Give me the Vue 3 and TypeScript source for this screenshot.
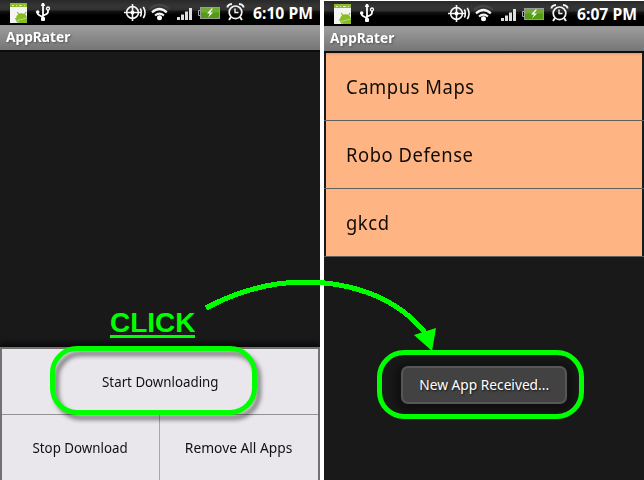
<script setup lang="ts">
import { ref } from 'vue'

interface Phone {
  id: string
  time: string
  apps: string[]
}

const title = 'AppRater'
const phones = ref<Phone[]>([
  { id: 'left', time: '6:10 PM', apps: [] },
  { id: 'right', time: '6:07 PM', apps: ['Campus Maps', 'Robo Defense', 'gkcd'] },
])
</script>

<template>
  <main class="stage">
    <section v-for="phone in phones" :key="phone.id" class="phone" :class="phone.id">
      <header class="status">
        <svg class="icons" width="250" height="25" viewBox="0 0 250 25">
          <!-- package installer -->
          <rect x="10" y="3" width="17" height="20" fill="#f4f5f2" />
          <rect x="10" y="3" width="17" height="4" fill="#8dbb2d" />
          <path d="M12 5.500h2M16 5.500h1M19 5.500h3M24 5.500h1" stroke="#dbeab9" stroke-width="1" />
          <path d="M16 18c.500-3 2.500-4.700 5.500-4.700 2.500 0 4.500 1.500 5.500 4V23h-8z" fill="#86bd20" />
          <path d="M19 14.500l-1.700-2.500M24.500 14.500l1.500-2.500M15.500 18l2.500 5" stroke="#86bd20" stroke-width="1.200" />
          <path d="M17 20.500l10-2.500" stroke="#c9e08f" stroke-width=".8" />
          <!-- usb -->
          <g fill="none" stroke="#fff" stroke-width="1.800">
            <path d="M43 5v14M37.500 11.500v1.500q0 1.500 2 2.300l3.500 2M48 10v2q0 1.500-2 2.300l-3 1.500" />
            <circle cx="48" cy="8.500" r="1.500" stroke-width="1.300" />
          </g>
          <path d="M41 5.500l1-2.500h2l1 2.500v.5h-4z" fill="#fff" />
          <circle cx="37.700" cy="12" r="1.800" fill="#fff" />
          <rect x="41" y="17" width="4" height="4" rx="1" fill="#fff" />
          <!-- gps target -->
          <g fill="none" stroke="#f6f6f6" stroke-width="1.600">
            <circle cx="132.500" cy="12.500" r="5.900" />
            <path d="M132.500 4v17M124 12.500h17" />
            <path d="M140.300 8.500q2.200 4 0 8M143.300 6.800q3.400 5.700 0 11.400" />
          </g>
          <circle cx="132.500" cy="12.500" r="2" fill="#fff" />
          <!-- wifi -->
          <g fill="none">
            <path d="M149.800 8.700q9.700-7.600 19.200 0" stroke="#444" stroke-width="2" />
            <path d="M152 12.400q7.400-6.800 14.800 0" stroke="#f4f4f4" stroke-width="2.200" />
            <path d="M155 15.600q4.500-4 9 0" stroke="#f4f4f4" stroke-width="2" />
          </g>
          <circle cx="159.500" cy="17.700" r="2.500" fill="#fff" />
          <!-- signal -->
          <path d="M177 17h3v3h-3zM181 14.500h3V20h-3zM185 11.500h3V20h-3zM189 8h3v12h-3z" fill="#dedede" />
          <!-- battery -->
          <rect x="200.500" y="7.500" width="19" height="11" fill="#519c12" stroke="#9b9b9b" />
          <rect x="201" y="8" width="18" height="4.500" fill="#6ead32" />
          <path d="M200 10.500h-1.500v5h1.500" fill="none" stroke="#aaa" />
          <path d="M211.500 8.500l-4.500 5h3l-2 4 5-5h-3l3-4z" fill="#fff" />
          <!-- alarm -->
          <g fill="none" stroke="#f4f4f4" stroke-width="1.700">
            <circle cx="235.500" cy="12.300" r="6.300" />
            <path d="M235 8.500v4h3.500" stroke-width="1.400" />
            <path d="M227.500 7.500q0-3 4.500-3.500M239 4q4.500.500 4.500 3.500M231 17l-2 3M240 17l2 3" stroke-width="2" />
          </g>
        </svg>
        <time class="clock">{{ phone.time }}</time>
      </header>
      <h1 class="title"><span>{{ title }}</span></h1>

      <div v-if="phone.id === 'left'" class="body">
        <div class="controls">
          <button class="start"><span>Start Downloading</span></button>
          <div class="pair">
            <button class="stop"><span>Stop Download</span></button>
            <button class="remove"><span>Remove All Apps</span></button>
          </div>
        </div>
      </div>
      <div v-else class="body">
        <ul class="apps">
          <li v-for="app in phone.apps" :key="app"><div class="app"><span>{{ app }}</span></div></li>
        </ul>
        <div class="toast"><span>New App Received...</span></div>
      </div>
    </section>

    <div class="ring ring-start"></div>
    <div class="ring ring-toast"></div>
    <div class="click">CLICK</div>
    <svg class="arrow" width="644" height="480" viewBox="0 0 644 480">
      <path d="M206 308C240 290 272 282 304 282C355 282 400 300 426 334" fill="none" stroke="#0f0" stroke-width="5" shape-rendering="crispEdges" />
      <path d="M414 335L436 328L432 351Z" fill="#0f0" />
    </svg>
  </main>
</template>

<style>
body {
  margin: 0;
  background: #fff;
}
</style>

<style scoped>
.stage {
  position: relative;
  display: flex;
  gap: 4px;
  width: 644px;
  height: 480px;
  overflow: hidden;
  background: #fff;
  font-family: "Noto Sans", "Open Sans", sans-serif;
}
.phone {
  display: flex;
  flex-direction: column;
  width: 320px;
  height: 480px;
  box-sizing: border-box;
  overflow: hidden;
  background: #191919;
}
.right {
  border-top: 1px solid #fff;
}
.status {
  display: flex;
  align-items: center;
  flex: none;
  height: 25px;
  background: linear-gradient(#292929 0, #353535 6px, #303030 10px, #151515 11px, #000 15px);
}
.icons {
  flex: none;
}
.clock {
  margin-left: 3px;
  color: #fff;
  font-size: 16px;
  font-weight: 700;
  line-height: 25px;
  white-space: nowrap;
  transform: translateY(1px) scaleX(.98);
  transform-origin: left;
}
.title {
  flex: none;
  height: 25px;
  margin: 0;
  padding-left: 6px;
  box-sizing: border-box;
  background: linear-gradient(#989898, #9a9a9a 3px, #757575);
  color: #fff;
  font-size: 14px;
  line-height: 24px;
  text-shadow: 1px 1px 2px #555;
}
.title span {
  display: inline-block;
  transform: scaleX(.98);
  transform-origin: left;
}
.body {
  display: flex;
  flex-direction: column;
  flex: 1;
  min-height: 0;
  border-top: 2px solid #0d0d0d;
}
.controls {
  display: flex;
  flex-direction: column;
  height: 133px;
  margin-top: auto;
  box-sizing: border-box;
  border: 2px solid #727272;
  border-bottom: 0;
  background: #e9e7eb;
  box-shadow: 0 -3px 6px #080508;
}
button {
  display: flex;
  align-items: center;
  justify-content: center;
  padding: 0;
  border: 0;
  background: transparent;
  color: #111;
  font: 14px "Noto Sans", sans-serif;
}
button span {
  transform: scaleX(.95);
  white-space: nowrap;
}
.remove span {
  transform: scaleX(.985);
}
.start {
  height: 66px;
  border-bottom: 1px solid #939195;
}
.pair {
  display: grid;
  grid-template-columns: 158px 1fr;
  flex: 1;
}
.stop {
  border-right: 1px solid #a9a7aa;
}
.apps {
  margin: 0;
  padding: 0;
  list-style: none;
}
.apps li {
  height: 67px;
  padding: 0 2px;
  border-bottom: 1px solid #606060;
}
.app {
  display: flex;
  align-items: center;
  height: 67px;
  padding-left: 20px;
  background: #ffb583;
  color: #100c08;
  font-size: 20px;
}
.apps li:first-child .app {
  background: linear-gradient(#df9e74, #ffb583 3px);
}
.app span {
  letter-spacing: .6px;
  transform: scaleX(.92);
  transform-origin: left;
}
.toast {
  display: flex;
  align-items: center;
  justify-content: center;
  width: 166px;
  height: 38px;
  margin: 109px 0 0 77px;
  box-sizing: border-box;
  border: 2px solid #575757;
  border-radius: 7px;
  background: #424242;
  box-shadow: 0 2px 7px 6px #101010;
  color: #fff;
  font-size: 14px;
  text-shadow: 1px 1px 2px #111;
  white-space: nowrap;
}
.toast span {
  transform: translateY(-1px) scaleX(.98);
}
.ring {
  position: absolute;
  box-sizing: border-box;
  border: 5px solid #0f0;
}
.ring-start {
  left: 50px;
  top: 346px;
  width: 207px;
  height: 69px;
  border-radius: 27px;
  filter: drop-shadow(4px 5px 2px rgba(0, 0, 0, .45));
}
.ring-toast {
  left: 377px;
  top: 350px;
  width: 207px;
  height: 69px;
  border-radius: 27px;
}
.click {
  position: absolute;
  left: 110px;
  top: 306px;
  height: 29px;
  width: 85px;
  border-bottom: 3px solid #0f0;
  color: #0f0;
  font: bold 28px/33px "Liberation Sans", sans-serif;
}
.arrow {
  position: absolute;
  inset: 0;
  pointer-events: none;
}
</style>
